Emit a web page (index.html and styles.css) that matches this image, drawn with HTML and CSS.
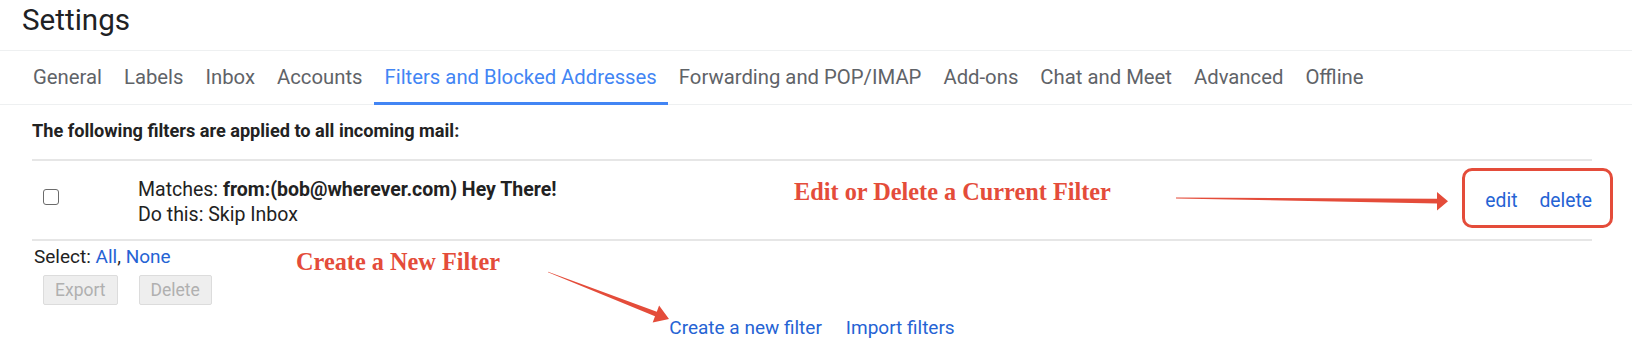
FILE: index.html
```html
<!DOCTYPE html>
<html lang="en">
<head>
<meta charset="utf-8">
<title>Settings</title>
<link rel="stylesheet" href="styles.css">
</head>
<body>
<div class="page">
  <header class="header"><h1 class="title">Settings</h1></header>
  <nav class="tabs">
    <a class="tab">General</a>
    <a class="tab">Labels</a>
    <a class="tab">Inbox</a>
    <a class="tab">Accounts</a>
    <a class="tab active">Filters and Blocked Addresses</a>
    <a class="tab">Forwarding and POP/IMAP</a>
    <a class="tab">Add-ons</a>
    <a class="tab">Chat and Meet</a>
    <a class="tab">Advanced</a>
    <a class="tab">Offline</a>
  </nav>
  <main class="content">
    <p class="intro">The following filters are applied to all incoming mail:</p>
    <div class="filter-table">
      <div class="filter-row">
        <div class="cell-check"><span class="checkbox"></span></div>
        <div class="cell-desc">
          <div class="line">Matches: <b>from:(bob@wherever.com) Hey There!</b></div>
          <div class="line">Do this: Skip Inbox</div>
        </div>
        <div class="cell-actions"><a class="link">edit</a><a class="link">delete</a></div>
      </div>
    </div>
    <div class="select">Select: <a class="link">All</a>, <a class="link">None</a></div>
    <div class="bulk"><button class="btn" disabled>Export</button><button class="btn" disabled>Delete</button></div>
    <div class="create"><a class="link">Create a new filter</a><a class="link">Import filters</a></div>
  </main>

  <div class="note note-edit">Edit or Delete a Current Filter</div>
  <div class="note note-create">Create a New Filter</div>
  <div class="callout-box"></div>
  <svg class="arrows" width="1632" height="358" viewBox="0 0 1632 358">
    <polygon points="1176,197.6 1437,198.8 1437,192 1448,201.2 1437,210.6 1437,203.6 1176,198.4"/>
    <polygon points="548,271.8 656.8,311.7 659.1,305.6 669,319 652.7,322.4 655,316.3 548,272.2"/>
  </svg>
</div>
</body>
</html>
```

FILE: styles.css
```css
* { box-sizing: border-box; }
html, body { margin: 0; padding: 0; background: #fff; }
body {
  font-family: Roboto, "Noto Sans", Arial, sans-serif;
  color: #222;
  width: 1632px;
  height: 358px;
  overflow: hidden;
}
.page { position: relative; width: 1632px; height: 358px; }

.header {
  height: 51px;
  padding: 3px 0 0 22px;
  border-bottom: 1px solid #eef0f1;
}
.title {
  margin: 0;
  font-weight: 400;
  font-size: 29.6px;
  line-height: 34px;
  color: #202124;
}

.tabs {
  display: flex;
  padding-left: 22px;
  border-bottom: 1px solid #eef0f1;
  height: 54px;
}
.tab {
  font-size: 20.3px;
  line-height: 24px;
  color: #5f6368;
  padding: 14px 11px 0;
  height: 54px;
  margin-bottom: -1px;
  border-bottom: 3px solid transparent;
  white-space: nowrap;
}
.tab.active {
  color: #4285f4;
  border-bottom-color: #4285f4;
}

.content { padding: 0 40px 0 32px; font-size: 19px; }
.intro {
  margin: 15px 0 0;
  height: 39px;
  font-size: 18.15px;
  font-weight: 700;
  line-height: 22px;
  color: #222;
}
.filter-table {
  border-top: 2px solid #e6e6e6;
  border-bottom: 2px solid #e6e6e6;
}
.filter-row {
  display: grid;
  grid-template-columns: 106px 1fr auto;
  height: 78px;
}
.cell-check { padding: 28px 0 0 11px; }
.checkbox {
  display: block;
  width: 16px;
  height: 16px;
  border: 1.5px solid #6b6b6b;
  border-radius: 3px;
  background: #fff;
}
.cell-desc { padding-top: 16px; font-size: 19.5px; }
.line { line-height: 25px; }
.line b { font-weight: 700; color: #222; }
.cell-actions {
  display: flex;
  align-items: center;
  gap: 22px;
  font-size: 19.3px;
}
.link { color: #2563d4; text-decoration: none; }

.select { margin-top: 5px; line-height: 22px; padding-left: 2px; }
.bulk { display: flex; gap: 21px; margin: 7px 0 0 11px; }
.btn {
  font-family: Roboto, "Noto Sans", Arial, sans-serif;
  font-size: 17.5px;
  height: 30px;
  padding: 0 11px;
  color: #b0b0b0;
  background: #eeeeee;
  border: 1px solid #dcdcdc;
  border-radius: 2px;
  line-height: 27px;
}
.create {
  display: flex;
  justify-content: center;
  gap: 24px;
  margin-top: 12px;
  line-height: 22px;
}

.note {
  position: absolute;
  font-family: "Liberation Serif", "Times New Roman", serif;
  font-weight: 700;
  font-size: 24.3px;
  line-height: 24px;
  color: #e44c3a;
  white-space: nowrap;
}
.note-edit { left: 794px; top: 180px; }
.note-create { left: 296px; top: 250px; }
.callout-box {
  position: absolute;
  left: 1462px;
  top: 168px;
  width: 151px;
  height: 60px;
  border: 3px solid #e44c3a;
  border-radius: 10px;
}
.arrows { position: absolute; left: 0; top: 0; pointer-events: none; }
.arrows polygon { fill: #e44c3a; }
```
